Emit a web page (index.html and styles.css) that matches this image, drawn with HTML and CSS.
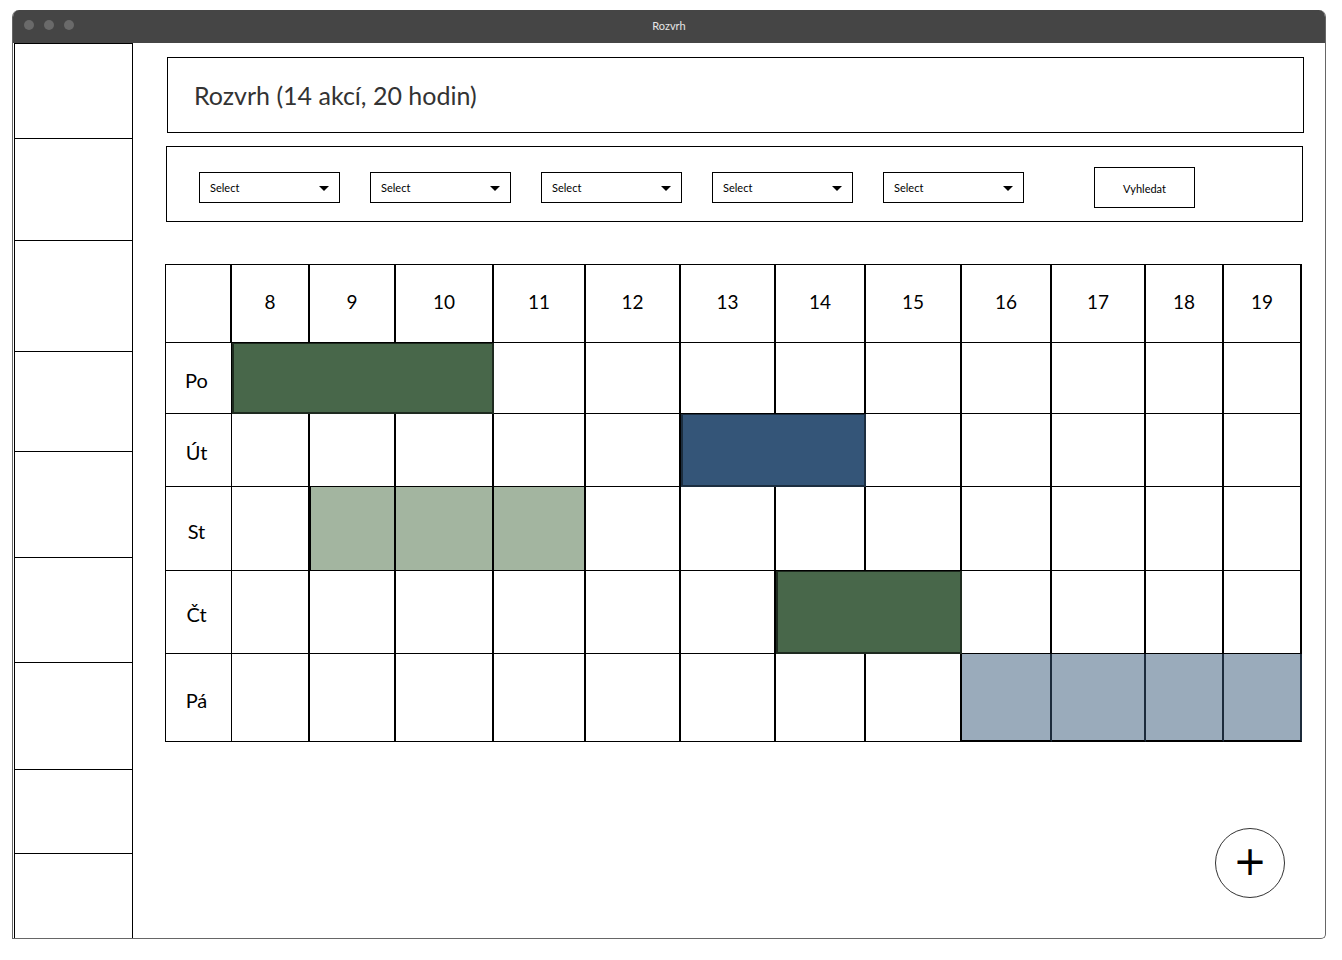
FILE: index.html
```html
<!DOCTYPE html>
<html lang="cs">
<head>
    <meta charset="UTF-8">
    <title>Rozvrh</title>
    <link rel="stylesheet" href="styles.css">
</head>
<body>
    <div class="window">
        <div class="titlebar">
            <div class="dots"><span></span><span></span><span></span></div>
            <div class="wintitle">Rozvrh</div>
        </div>

        <div class="content">
            <!-- levé menu -->
            <div class="sidebar">
                <div class="side-item h95"></div>
                <div class="side-item h102"></div>
                <div class="side-item h111"></div>
                <div class="side-item h100"></div>
                <div class="side-item h106"></div>
                <div class="side-item h105"></div>
                <div class="side-item h107"></div>
                <div class="side-item h84"></div>
                <div class="side-item h86"></div>
            </div>

            <main>
                <div class="headbox">
                    <h1>Rozvrh (14 akcí, 20 hodin)</h1>
                </div>

                <div class="filters">
                    <div class="select">Select<span class="caret"></span></div>
                    <div class="select">Select<span class="caret"></span></div>
                    <div class="select">Select<span class="caret"></span></div>
                    <div class="select">Select<span class="caret"></span></div>
                    <div class="select">Select<span class="caret"></span></div>
                    <button class="search">Vyhledat</button>
                </div>

                <!-- rozvrh -->
                <div class="grid">
                    <div class="cell"></div>
                    <div class="cell hour">8</div>
                    <div class="cell hour">9</div>
                    <div class="cell hour">10</div>
                    <div class="cell hour">11</div>
                    <div class="cell hour">12</div>
                    <div class="cell hour">13</div>
                    <div class="cell hour">14</div>
                    <div class="cell hour">15</div>
                    <div class="cell hour">16</div>
                    <div class="cell hour">17</div>
                    <div class="cell hour">18</div>
                    <div class="cell hour">19</div>

                    <div class="cell day">Po</div>
                    <div class="cell event green span3"></div>
                    <div class="cell"></div>
                    <div class="cell"></div>
                    <div class="cell"></div>
                    <div class="cell"></div>
                    <div class="cell"></div>
                    <div class="cell"></div>
                    <div class="cell"></div>
                    <div class="cell"></div>
                    <div class="cell"></div>

                    <div class="cell day">Út</div>
                    <div class="cell"></div>
                    <div class="cell"></div>
                    <div class="cell"></div>
                    <div class="cell"></div>
                    <div class="cell"></div>
                    <div class="cell event blue span2"></div>
                    <div class="cell"></div>
                    <div class="cell"></div>
                    <div class="cell"></div>
                    <div class="cell"></div>
                    <div class="cell"></div>

                    <div class="cell day">St</div>
                    <div class="cell"></div>
                    <div class="cell sage first"></div>
                    <div class="cell sage"></div>
                    <div class="cell sage"></div>
                    <div class="cell"></div>
                    <div class="cell"></div>
                    <div class="cell"></div>
                    <div class="cell"></div>
                    <div class="cell"></div>
                    <div class="cell"></div>
                    <div class="cell"></div>
                    <div class="cell"></div>

                    <div class="cell day">Čt</div>
                    <div class="cell"></div>
                    <div class="cell"></div>
                    <div class="cell"></div>
                    <div class="cell"></div>
                    <div class="cell"></div>
                    <div class="cell"></div>
                    <div class="cell event green span2"></div>
                    <div class="cell"></div>
                    <div class="cell"></div>
                    <div class="cell"></div>
                    <div class="cell"></div>

                    <div class="cell day">Pá</div>
                    <div class="cell"></div>
                    <div class="cell"></div>
                    <div class="cell"></div>
                    <div class="cell"></div>
                    <div class="cell"></div>
                    <div class="cell"></div>
                    <div class="cell"></div>
                    <div class="cell"></div>
                    <div class="cell slate"></div>
                    <div class="cell slate"></div>
                    <div class="cell slate"></div>
                    <div class="cell slate"></div>
                </div>
            </main>

            <button class="fab">+</button>
        </div>
    </div>
</body>
</html>
```

FILE: styles.css
```css
body {
    margin: 0;
    background: #fff;
    font-family: Lato, "Open Sans", sans-serif;
    color: #000;
}

.window {
    margin: 10px 0 0 12px;
    width: 1314px;
    height: 929px;
    border: 1px solid #666;
    border-top: none;
    border-radius: 7px 7px 5px 0;
    box-sizing: border-box;
    display: flex;
    flex-direction: column;
    overflow: hidden;
}

.titlebar {
    height: 33px;
    background: #454545;
    position: relative;
    display: flex;
    align-items: center;
    justify-content: center;
    flex-shrink: 0;
}

.dots {
    position: absolute;
    left: 11px;
    top: 10px;
    display: flex;
    gap: 10px;
}

.dots span {
    width: 10px;
    height: 10px;
    border-radius: 50%;
    background: #6a6a6a;
}

.wintitle {
    color: #e6e6e6;
    font-size: 11px;
    margin-top: -3px;
}

.content {
    flex: 1;
    display: flex;
    position: relative;
}

.sidebar {
    margin-left: 1px;
    width: 119px;
    border-left: 1px solid #000;
    border-right: 1px solid #000;
    border-top: 1px solid #000;
    box-sizing: border-box;
    display: flex;
    flex-direction: column;
    flex-shrink: 0;
}

.side-item {
    border-bottom: 1px solid #000;
    box-sizing: border-box;
    flex-shrink: 0;
}

.h95 { height: 95px; }
.h102 { height: 102px; }
.h111 { height: 111px; }
.h100 { height: 100px; }
.h106 { height: 106px; }
.h105 { height: 105px; }
.h107 { height: 107px; }
.h84 { height: 84px; }
.h86 { height: 86px; }

main {
    padding: 14px 0 0 33px;
    display: flex;
    flex-direction: column;
    width: 1138px;
}

.headbox {
    height: 76px;
    margin-left: 1px;
    border: 1px solid #000;
    box-sizing: border-box;
    display: flex;
    align-items: center;
    padding: 0 0 0 26px;
}

h1 {
    margin: 0;
    font-weight: normal;
    font-size: 25px;
    color: #333;
}

.filters {
    width: 1137px;
    margin-top: 13px;
    height: 76px;
    border: 1px solid #000;
    box-sizing: border-box;
    display: flex;
    align-items: center;
    padding: 6px 0 0 32px;
    gap: 30px;
}

.select {
    width: 141px;
    height: 31px;
    border: 1px solid #000;
    box-sizing: border-box;
    font-size: 11px;
    display: flex;
    align-items: center;
    justify-content: space-between;
    padding: 0 10px 0 10px;
}

.caret {
    width: 0;
    height: 0;
    border-left: 5px solid transparent;
    border-right: 5px solid transparent;
    border-top: 5px solid #000;
    margin-top: 3px;
}

.search {
    margin-left: 40px;
    width: 101px;
    height: 41px;
    border: 1px solid #000;
    background: #fff;
    font-family: Lato, sans-serif;
    font-size: 11px;
    padding: 2px 0 0 0;
}

.grid {
    width: 1137px;
    margin-top: 42px;
    margin-left: -1px;
    display: grid;
    grid-template-columns: 66px 78px 86px 98px 92px 95px 95px 90px 96px 90px 94px 78px 78px;
    grid-template-rows: 78px 71px 73px 84px 83px 88px;
    border-top: 1px solid #000;
    border-left: 1px solid #000;
    box-sizing: border-box;
}

.cell {
    border-right: 2px solid #000;
    border-bottom: 1px solid #000;
    box-sizing: border-box;
    display: flex;
    align-items: center;
    justify-content: center;
    font-size: 20px;
}

.day {
    border-right-width: 1px;
    padding: 4px 4px 0 0;
}

.hour {
    font-size: 19px;
    padding-bottom: 4px;
}

.span2 { grid-column: span 2; }
.span3 { grid-column: span 3; }

.event {
    border: 2px solid #1e2a1f;
    border-top-width: 1px;
}

.green { background: #48674a; }
.blue { background: #345578; border-color: #1c2e40; }

.sage {
    background: #a3b5a0;
}

.sage.first {
    border-left: 1px solid #000;
}

.slate {
    background: #9aabbb;
    border-right-color: #1c2b3b;
    border-bottom: 2px solid #000;
}

.fab {
    position: absolute;
    right: 40px;
    bottom: 42px;
    width: 70px;
    height: 70px;
    border-radius: 50%;
    border: 1px solid #333;
    background: #fff;
    font-family: "DejaVu Sans", sans-serif;
    font-size: 40px;
    line-height: 1;
    padding: 0 0 4px 0;
    color: #000;
}
```
